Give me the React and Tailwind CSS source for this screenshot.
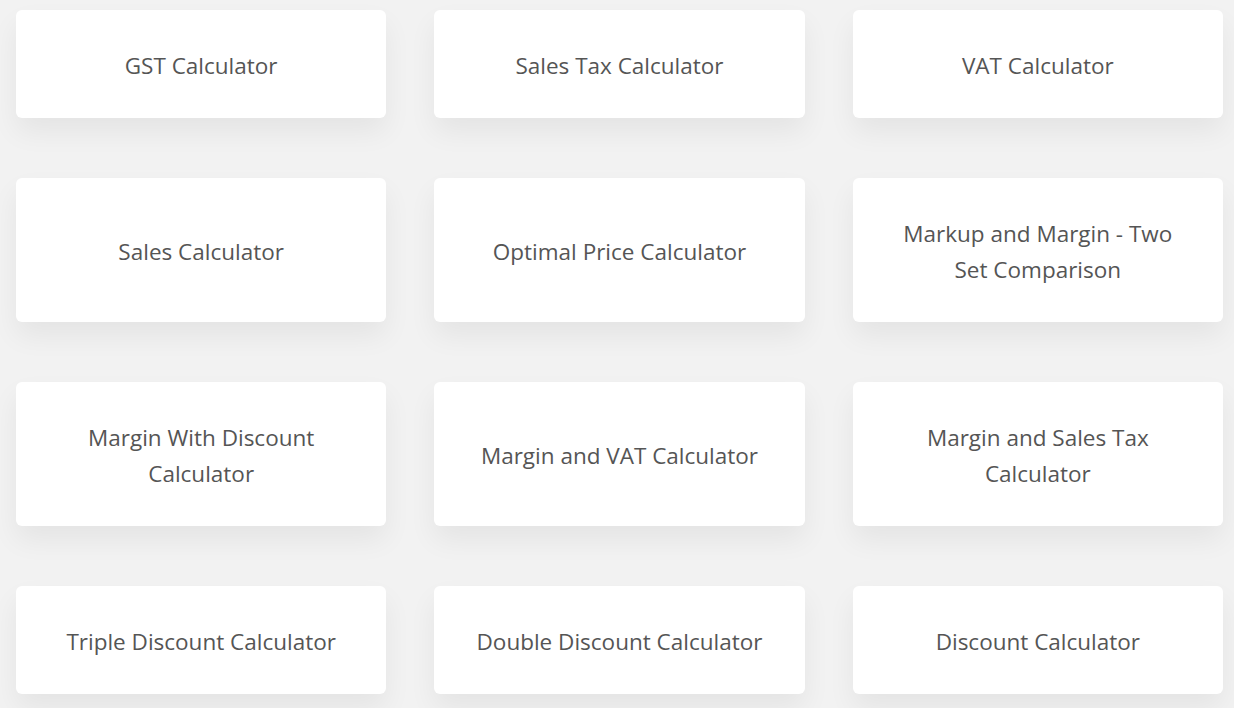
import React from 'react';

const rows = [
  ['GST Calculator', 'Sales Tax Calculator', 'VAT Calculator'],
  ['Sales Calculator', 'Optimal Price Calculator', 'Markup and Margin - Two Set Comparison'],
  ['Margin With Discount Calculator', 'Margin and VAT Calculator', 'Margin and Sales Tax Calculator'],
  ['Triple Discount Calculator', 'Double Discount Calculator', 'Discount Calculator'],
];

const CalcCard = ({ title }) => (
  <a
    href="#"
    className="flex items-center justify-center text-center bg-white rounded-md px-9 pt-[38px] pb-[34px] shadow-[0_14px_28px_rgba(0,0,0,0.06)] text-[#555] text-[22.5px] leading-[36px]"
  >
    {title}
  </a>
);

const App = () => {
  return (
    <div className="min-h-screen bg-[#f2f2f2] pt-[10px] pl-4 pr-[11px] pb-4" style={{ fontFamily: '"Open Sans", "Noto Sans", sans-serif' }}>
      <div className="grid grid-cols-3 gap-x-12 gap-y-[60px]">
        {rows.flat().map((t) => (
          <CalcCard key={t} title={t} />
        ))}
      </div>
    </div>
  );
};

export default App;
